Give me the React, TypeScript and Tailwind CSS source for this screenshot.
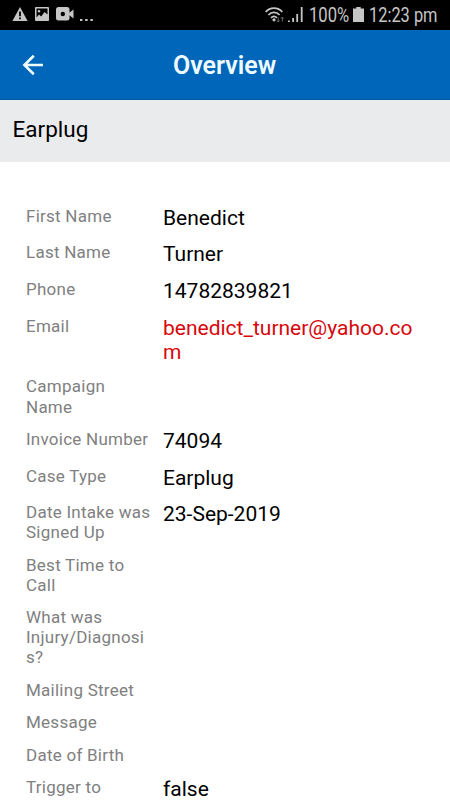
type Detail = {
  label: string;
  value?: string;
  link?: boolean;
};

const details: Detail[] = [
  { label: "First Name", value: "Benedict" },
  { label: "Last Name", value: "Turner" },
  { label: "Phone", value: "14782839821" },
  { label: "Email", value: "benedict_turner@yahoo.com", link: true },
  { label: "Campaign Name" },
  { label: "Invoice Number", value: "74094" },
  { label: "Case Type", value: "Earplug" },
  { label: "Date Intake was Signed Up", value: "23-Sep-2019" },
  { label: "Best Time to Call" },
  { label: "What was Injury/Diagnosis?" },
  { label: "Mailing Street" },
  { label: "Message" },
  { label: "Date of Birth" },
  { label: "Trigger to", value: "false" },
];

export default function App() {
  return (
    <div className="flex h-[800px] w-[450px] flex-col overflow-hidden bg-white font-[Roboto,sans-serif] text-black">
      <StatusBar />
      <header className="flex h-[70px] shrink-0 items-center border-b border-[#0556a3] bg-[#0066b9] pl-[22px] text-[#effcff]">
        <svg viewBox="0 0 22 22" className="h-[22px] w-[22px]" fill="none" stroke="currentColor" strokeWidth="2.6">
          <path d="M11.8 1.8 2.4 11l9.4 9.2M2.4 11H21" />
        </svg>
        <h1 className="w-[361px] pt-0.5 text-center text-[25px] font-semibold">Overview</h1>
      </header>
      <div className="flex h-[62px] shrink-0 items-center bg-[#eaebed] px-[12.5px] pb-[3px]">
        <h2 className="text-[22.5px]">Earplug</h2>
      </div>
      <dl className="flex flex-col gap-[12.4px] pt-[43.9px] pl-[26px]">
        {details.map((detail) => (
          <DetailRow key={detail.label} {...detail} />
        ))}
      </dl>
    </div>
  );
}

function DetailRow({ label, value, link }: Detail) {
  return (
    <div className="flex shrink-0">
      <dt className="w-[137px] pr-[11px] text-[17px] leading-[20.05px] tracking-[0.25px] wrap-anywhere text-[#808080]">
        {label}
      </dt>
      {value ? (
        <dd className={link ? "w-[252px] text-[21px] leading-[24.2px] wrap-anywhere text-[#d8060c]" : "w-[252px] text-[21px] leading-[24.2px]"}>
          {value}
        </dd>
      ) : null}
    </div>
  );
}

function StatusBar() {
  return (
    <div className="flex h-[30px] shrink-0 items-center justify-between bg-black pr-3 pl-3 text-[#c6c6c6]">
      <div className="flex items-center pb-0.5">
        <svg viewBox="0 0 16 14" className="h-3.5 w-4" fill="currentColor">
          <path d="M8 0 15.6 14H.4Z" />
          <path d="M7.1 4.6h1.8v4.6H7.1zM7.1 10.4h1.8v1.8H7.1z" fill="#000" />
        </svg>
        <svg viewBox="0 0 14 14" className="ml-[7px] h-3.5 w-3.5">
          <rect width="14" height="14" rx="1" fill="currentColor" />
          <path d="M1.5 1.5h11v6L9.5 5 6.2 9.5 4 7.5l-2.5 3z" fill="#000" />
          <circle cx="4" cy="4.3" r="1.2" fill="currentColor" />
        </svg>
        <svg viewBox="0 0 18 14" className="ml-[7px] h-3.5 w-[18px]" fill="currentColor">
          <rect width="13.5" height="13.5" rx="2.5" />
          <path d="m13 6 4.5-3.5v9L13 8z" />
          <circle cx="6.8" cy="7" r="2.2" fill="#000" />
        </svg>
        <svg viewBox="0 0 13 14" className="ml-1.5 h-3.5 w-[13px]" fill="currentColor">
          <path d="M0 12h2.4v2H0zM5.2 12h2.4v2H5.2zM10.4 12h2.4v2h-2.4z" />
        </svg>
      </div>
      <div className="flex items-center pb-px">
        <svg viewBox="0 0 20 16" className="h-4 w-5" fill="none" stroke="currentColor" strokeWidth="1.7">
          <path d="M.7 5C5-.2 13-.2 17.3 5M3.4 8C6.5 4.4 11.5 4.4 14.6 8M6 10.8c1.9-2 4.1-2 6 0" />
          <circle cx="9" cy="12.8" r="1.6" fill="currentColor" stroke="none" />
          <path d="M13.3 15v-4.5M12 13.5l1.3 1.6 1.3-1.6M17.3 14.5V10M16 11.6l1.3-1.6 1.3 1.6" stroke="#666" strokeWidth="1" />
        </svg>
        <svg viewBox="0 0 15 15" className="ml-[3px] h-[15px] w-[15px]" fill="currentColor">
          <path d="M0 13.5h1.8V15H0zM4.2 11H6v4H4.2zM8.3 7h1.8v8H8.3zM12.8 0h1.8v15h-1.8z" />
        </svg>
        <span className="ml-[6px] w-[41px] text-[20px]">
          <span className="inline-block origin-left scale-x-[0.83]">100%</span>
        </span>
        <svg viewBox="0 0 11 15" className="ml-[3px] h-[15px] w-[11px]" fill="currentColor">
          <path d="M3.3 0h4.4v1.6H11V15H0V1.6h3.3z" />
        </svg>
        <span className="ml-[5px] w-[69px] text-[20px] whitespace-nowrap">
          <span className="inline-block origin-left scale-x-[0.82]">12:23 pm</span>
        </span>
      </div>
    </div>
  );
}
